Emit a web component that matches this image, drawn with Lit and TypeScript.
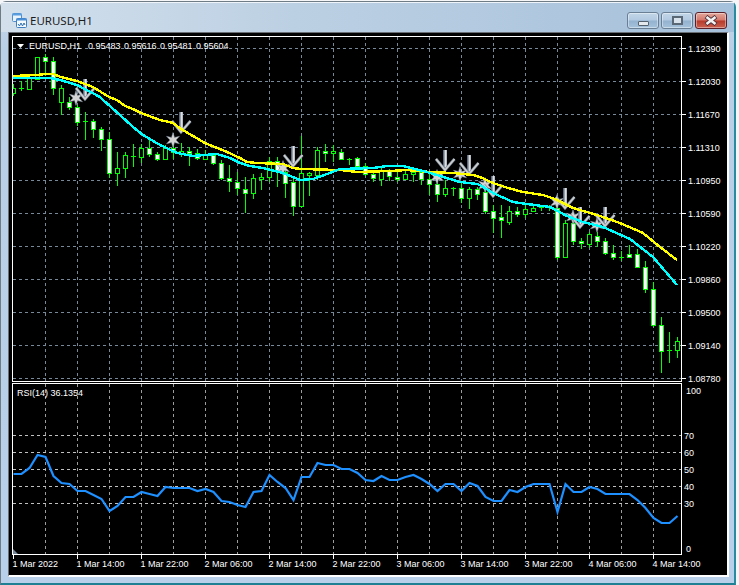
import { LitElement, html, css, svg } from "lit";
import { customElement } from "lit/decorators.js";

// [high, top, bottom, low, kind] kind: 0 filled (white), 1 hollow, 2 doji
const C: number[][] = [
  [84,88,93,96,1],[81,88,88,91,2],[78,78,89,89,1],[57,57,79,79,1],[54,57,61,76,0],[57,61,88,95,0],[85,88,102,115,1],[97,102,107,110,0],
  [105,107,122,126,0],[112,121,121,140,2],[119,121,129,138,0],[127,129,139,151,0],[132,139,173,178,0],[152,168,173,186,1],[152,155,168,178,1],[144,156,156,167,2],
  [144,148,157,163,1],[140,148,154,157,0],[152,154,159,161,0],[145,148,159,160,1],[143,148,152,159,0],[143,151,153,157,1],[147,151,153,166,0],[149,153,158,160,0],
  [150,155,159,160,1],[153,155,163,165,0],[160,163,178,180,0],[165,178,181,192,0],[172,182,188,195,0],[177,189,193,213,0],[174,178,193,199,1],[173,177,179,190,1],
  [157,161,177,182,1],[157,161,170,187,0],[165,172,183,198,0],[177,182,206,216,0],[136,173,206,206,1],[172,173,175,196,1],[147,150,175,180,1],[144,151,153,162,0],
  [145,151,153,162,1],[149,152,159,160,0],[158,159,159,165,2],[157,158,166,166,0],[163,166,174,176,0],[172,174,178,182,0],[168,171,179,186,1],[169,171,176,181,0],
  [171,177,179,182,0],[171,174,179,180,1],[169,172,174,182,1],[170,172,179,185,0],[172,179,184,195,0],[180,184,194,202,0],[180,188,194,197,1],[187,188,188,196,2],
  [182,188,198,203,0],[187,189,198,209,1],[187,189,194,200,0],[187,192,211,214,0],[205,211,218,233,0],[205,217,220,238,0],[206,211,222,225,1],[207,211,214,217,0],
  [205,209,214,218,1],[205,208,211,211,1],[205,207,207,211,2],[205,207,207,211,2],[202,208,257,260,0],[220,223,257,258,1],[218,223,241,245,0],[238,241,243,249,0],
  [232,234,244,248,1],[232,236,241,247,0],[238,241,253,255,0],[245,253,257,260,0],[251,257,257,261,2],[245,254,257,257,0],[249,254,267,268,0],[261,267,289,293,0],
  [282,289,325,327,0],[317,325,351,373,0],[332,350,350,363,2],[337,341,350,358,1],
];

const YELLOW = "13,76 37,75 45,74 53,74 61,77 77,81 93,87 109,97 117,100 125,106 133,109 141,113 160,120 173,123 181,129 205,143 227,152 240,158 247,162 257,163 283,164 293,168 301,169 340,170 357,172 390,171 407,170 430,172 453,173 473,175 480,177 493,183 508,188 523,192 543,195 555,199 573,208 597,215 620,223 643,233 660,247 677,260";
const CYAN = "13,78 50,78 60,80 77,85 100,97 103,100 120,115 133,127 143,135 160,145 177,153 193,156 217,154 230,158 240,163 250,166 263,168 283,173 300,180 313,179 327,174 340,169 373,168 387,166 403,166 427,172 440,176 460,182 477,184 480,185 493,193 513,202 527,204 550,207 567,216 583,222 603,227 630,239 653,257 677,285";
const RSI = [474,474,468,455,457,476,483,484,491,491,495,499,511,506,497,497,492,494,496,487,488,488,488,491,489,492,501,502,505,507,492,491,475,482,488,500,477,477,463,465,465,469,469,473,480,481,476,480,480,477,475,479,484,491,484,484,491,483,486,497,501,501,490,492,487,484,484,484,512,484,492,492,487,489,494,494,494,494,500,508,518,523,523,516];

const ARROWS = [[85,79,100],[181,112,133],[293,146,167],[445,150,171],[469,155,175],[493,176,197],[565,188,209],[580,207,228],[605,207,227]];
const STARS = [[76,98],[173,140],[283,168],[437,177],[460,174],[485,185],[557,202],[573,217],[597,225]];

const OHLC: [string, number][] = [["EURUSD,H1",29],["0.95483",88],["0.95616",124],["0.95481",160],["0.95604",196]];
const PRICES = ["1.12390","1.12030","1.11670","1.11310","1.10950","1.10590","1.10220","1.09860","1.09500","1.09140","1.08780"];
const PRICE_Y = [48,81,114,147,180,213,246,279,312,345,378];
const LEVELS: [string, number][] = [["70",435],["60",452],["50",469],["40",486],["30",503]];
const TIMES = ["1 Mar 2022","1 Mar 14:00","1 Mar 22:00","2 Mar 06:00","2 Mar 14:00","2 Mar 22:00","3 Mar 06:00","3 Mar 14:00","3 Mar 22:00","4 Mar 06:00","4 Mar 14:00"];

const VX: number[] = [];
for (let x = 45; x <= 653; x += 32) VX.push(x);

function starPoints(cx: number, cy: number) {
  const p: string[] = [];
  for (let i = 0; i < 12; i++) {
    const r = i % 2 === 0 ? 7.5 : 3;
    const a = (Math.PI / 6) * i - Math.PI / 2;
    p.push(`${(cx + r * Math.cos(a)).toFixed(1)},${(cy + r * Math.sin(a)).toFixed(1)}`);
  }
  return p.join(" ");
}

@customElement("app-root")
export class AppRoot extends LitElement {
  static styles = css`
    :host { display: block; width: 739px; height: 585px; background: #f4f6f8; overflow: hidden; }
    .window {
      width: 736px; height: 584px; margin-top: 1px; box-sizing: border-box;
      display: flex; flex-direction: column;
      border: 1px solid #6f7c86; border-bottom: 2px solid #1f7f93; border-right: 2px solid #2a8ba0;
      border-radius: 6px 6px 0 0;
      background: linear-gradient(180deg, #c5d8e9 0%, #b9cfe6 8%, #b8d0ea 100%);
    }
    .title {
      height: 30px; flex: none; display: flex; align-items: flex-start;
      background: linear-gradient(90deg, #d3e0ec 0%, #bcd0e3 40%, #a6c1db 100%);
      border-top: 1px solid #eef4f9; box-sizing: border-box;
    }
    .icon { width: 16px; height: 15px; margin: 10px 0 0 10px; flex: none; }
    .name { font: 11.5px "Noto Sans", sans-serif; color: #1c1c1c; margin: 9px 0 0 3px; line-height: 17px; flex: 1; }
    .btns { display: flex; gap: 2px; margin: 9px 7px 0 0; }
    .btn {
      width: 32px; height: 17px; box-sizing: border-box; border: 1px solid #6b7f94; border-radius: 3px;
      display: flex; align-items: center; justify-content: center;
      background: linear-gradient(180deg, #c3d6e8 0%, #b1c9e0 48%, #93b2cf 52%, #a6c2dc 100%);
      box-shadow: inset 0 0 0 1px rgba(255,255,255,.4);
    }
    .btn.close {
      border-color: #5b1f2a;
      background: linear-gradient(180deg, #e3a79c 0%, #d5766a 48%, #b7392a 52%, #c9604f 100%);
    }
    .min { width: 11px; height: 5px; margin-top: 5px; background: #e4e9ee; border: 1px solid #56636f; box-sizing: border-box; border-radius: 1px; }
    .rest { width: 11px; height: 9px; box-sizing: border-box; border: 2px solid #5a6875; background: #d7e2ec; }
    .client-wrap { flex: 1; display: flex; padding: 0 5px 6px 7px; min-height: 0; }
    .client {
      flex: 1; background: #000; min-width: 0;
      border-top: 1px solid #6a6f75; border-left: 1px solid #6a6f75;
      border-right: 2px solid #fff; border-bottom: 2px solid #fff;
    }
    svg.chart { display: block; }
    .lbl { font: 9px "Liberation Sans", sans-serif; fill: #fff; }
    .hdr { fill: #fff; paint-order: stroke; stroke: #000; stroke-width: 1.5px; }
  `;

  private chart() {
    const frame = svg`
      <g shape-rendering="crispEdges" fill="none" stroke="#fff">
        <path d="M12.5 36.5H681.5V381.5H12.5Z"/>
        <path d="M12.5 383.5H681.5V554.5H12.5Z"/>
        ${PRICE_Y.map(y => svg`<path d=${`M681.5 ${y + 0.5}h4`}/>`)}
        ${TIMES.map((_, i) => svg`<path d=${`M${13 + 64 * i + 0.5} 554.5v4`}/>`)}
      </g>`;
    const grid = svg`
      <g shape-rendering="crispEdges" fill="none" stroke-dasharray="3 3">
        <g stroke="#778899">
          ${PRICE_Y.map(y => svg`<path d=${`M13 ${y + 0.5}H681`}/>`)}
          ${VX.map(x => svg`<path d=${`M${x + 0.5} 37V381`}/>`)}
        </g>
        <g stroke="#9c9c9c">${VX.map(x => svg`<path d=${`M${x + 0.5} 384V554`}/>`)}</g>
        <g stroke="#c0c0c0">${LEVELS.map(l => svg`<path d=${`M13 ${l[1] + 0.5}H681`}/>`)}</g>
      </g>`;
    const candles = svg`
      <g shape-rendering="crispEdges" clip-path="url(#main)">
        ${C.map((c, i) => {
          const x = 13 + 8 * i;
          const [hi, top, bot, lo, kind] = c;
          const wick = svg`<rect x=${x} y=${hi} width="1" height=${lo - hi} fill="#0f0"/>`;
          if (kind === 2) return svg`${wick}<rect x=${x - 2} y=${top} width="5" height="1" fill="#0f0"/>`;
          return svg`${wick}<rect x=${x - 1.5} y=${top + 0.5} width="4" height=${Math.max(bot - top, 1)} fill=${kind === 0 ? "#fff" : "#000"} stroke="#0f0"/>`;
        })}
      </g>`;
    const marks = svg`
      ${STARS.map(s => svg`<polygon points=${starPoints(s[0], s[1])} fill="#d4d4d4" stroke="#8492a3" stroke-width=".5"/>`)}
      ${ARROWS.map(([x, t, b]) => svg`
        <path d=${`M${x} ${t}V${b - 1}`} stroke="#74859a" stroke-width="3.6" fill="none"/>
        <path d=${`M${x + 0.7} ${t}V${b - 1}`} stroke="#dedede" stroke-width="2" fill="none"/>
        <path d=${`M${x - 9} ${b - 12}L${x} ${b - 1}L${x + 9.5} ${b - 12}`} stroke="#7c8a9b" stroke-width="2.8" fill="none"/>
        <path d=${`M${x - 9} ${b - 12}L${x} ${b - 1}L${x + 9.5} ${b - 12}`} stroke="#cfcfcf" stroke-width="1.6" fill="none"/>
      `)}`;
    const lines = svg`
      <polyline points=${YELLOW} fill="none" stroke="#ff0" stroke-width="2.4" shape-rendering="crispEdges"/>
      <polyline points=${CYAN} fill="none" stroke="#0ff" stroke-width="2.4" shape-rendering="crispEdges"/>
      <polyline points=${RSI.map((y, i) => `${13.5 + 8 * i},${y}`).join(" ")} fill="none" stroke="#1e90ff" stroke-width="2.2"/>`;
    const text = svg`
      <polygon points="17,44 24,44 20.5,48" fill="#fff"/>
      ${OHLC.map(o => svg`<text class="lbl" x=${o[1]} y="49">${o[0]}</text>`)}
      <text class="lbl" x="17" y="396">RSI(14) 36.1354</text>
      <polygon points="13,549 13,554 18,554" fill="#778899"/>
      ${PRICES.map((p, i) => svg`<text class="lbl" x="688" y=${PRICE_Y[i] + 4}>${p}</text>`)}
      <text class="lbl" x="686" y="394">100</text>
      ${LEVELS.map(l => svg`<text class="lbl" x="684" y=${l[1] + 4}>${l[0]}</text>`)}
      <text class="lbl" x="686" y="552">0</text>
      ${TIMES.map((t, i) => svg`<text class="lbl" x=${12.5 + 64 * i} y="567">${t}</text>`)}`;
    return html`
      <svg class="chart" width="718" height="542" viewBox="9 33 718 542">
        <defs><clipPath id="main"><rect x="13" y="37" width="668" height="344"/></clipPath></defs>
        ${grid}${candles}${marks}${lines}${frame}${text}
      </svg>`;
  }

  render() {
    return html`
      <div class="window">
        <div class="title">
          <svg class="icon" viewBox="0 0 16 15">
            <rect x="1.5" y="0.5" width="9" height="8" rx="1" fill="#eaf3fb" stroke="#4f8fcf"/>
            <rect x="1.5" y="0.5" width="9" height="2" fill="#5a9ee0"/>
            <rect x="5.5" y="5.5" width="10" height="9" rx="1" fill="#f5fafe" stroke="#3f7fc0"/>
            <rect x="5.5" y="5.5" width="10" height="2" fill="#4a90d8"/>
            <path d="M7 11l1.5 2 1.5-3 1.5 3 1.5-3 1 2" fill="none" stroke="#2f6fb0"/>
          </svg>
          <div class="name">EURUSD,H1</div>
          <div class="btns">
            <div class="btn"><div class="min"></div></div>
            <div class="btn"><div class="rest"></div></div>
            <div class="btn close">
              <svg width="16" height="11" viewBox="0 0 16 11">
                <path d="M3 1.5L13 9.5M13 1.5L3 9.5" stroke="#4a3038" stroke-width="4.2" fill="none"/>
                <path d="M3.5 2L12.5 9M12.5 2L3.5 9" stroke="#f2f2f2" stroke-width="2.6" fill="none"/>
              </svg>
            </div>
          </div>
        </div>
        <div class="client-wrap"><div class="client">${this.chart()}</div></div>
      </div>`;
  }
}
